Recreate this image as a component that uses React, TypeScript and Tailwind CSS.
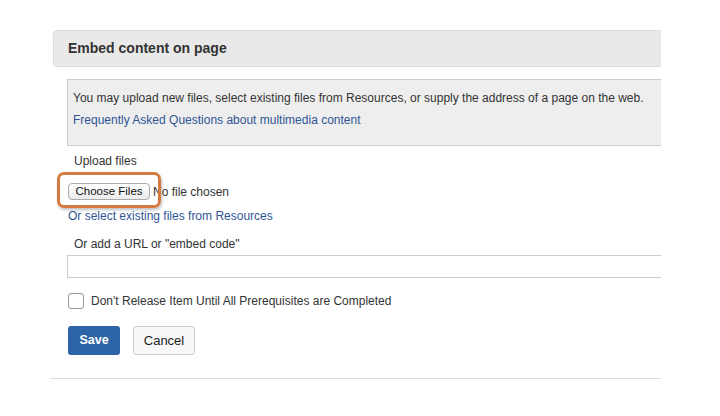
export default function App() {
  return (
    <div className="w-[720px] h-[416px] bg-white text-[12px] text-[#333] font-['Liberation_Sans',Arial,sans-serif] overflow-hidden">
      <div className="ml-[50px] pt-[30px] w-[611px] overflow-hidden">
        {/* Header */}
        <div className="ml-[3px] w-[660px] h-[37px] flex items-center pl-[14px] bg-[#e9e9e9] border border-[#dcdcdc] rounded-[4px]">
          <span className="text-[14px] font-bold text-[#333]">Embed content on page</span>
        </div>

        {/* Info box */}
        <div className="mt-[12px] ml-[17px] w-[660px] h-[67px] bg-[#eeeeee] border border-[#cccccc] pl-[5px] pt-[11px]">
          <p className="leading-[15px]">
            You may upload new files, select existing files from Resources, or supply the address of a page on the web.
          </p>
          <a className="block mt-[7px] leading-[15px] text-[#2f5596]">Frequently Asked Questions about multimedia content</a>
        </div>

        {/* Upload */}
        <div className="mt-[8px] ml-[24px] leading-[15px]">Upload files</div>
        <div className="relative mt-[14px] ml-[18px] flex items-center gap-[3px] h-[17px]">
          <button className="h-[17px] w-[82px] text-[11.5px] leading-none text-[#111] border border-[#aaaaaa] rounded-[4px] bg-gradient-to-b from-white to-[#ececec]">
            Choose Files
          </button>
          <span className="text-[12px]">No file chosen</span>
          <div className="absolute left-[-11px] top-[-11px] w-[104px] h-[36px] border-[3px] border-[#d57a40] rounded-[7px] shadow-[1px_2px_3px_rgba(0,0,0,0.25)]" />
        </div>
        <a className="block mt-[9px] ml-[18px] leading-[15px] text-[#2f5596]">Or select existing files from Resources</a>

        {/* URL */}
        <div className="mt-[13px] ml-[24px] leading-[15px]">Or add a URL or "embed code"</div>
        <div className="mt-[3px] ml-[17px] w-[660px] h-[23px] border border-[#cccccc] bg-white" />

        {/* Checkbox */}
        <div className="mt-[15px] ml-[18px] flex items-center gap-[7px]">
          <div className="w-[16px] h-[16px] border border-[#999] rounded-[3px] bg-white" />
          <span className="leading-[15px]">Don't Release Item Until All Prerequisites are Completed</span>
        </div>

        {/* Buttons */}
        <div className="mt-[17px] ml-[18px] flex gap-[13px]">
          <button className="w-[52px] h-[29px] bg-[#2d64a8] text-white font-bold text-[12.5px] rounded-[3px]">Save</button>
          <button className="w-[62px] h-[29px] bg-[#f8f8f8] border border-[#cccccc] text-[#222] text-[13px] rounded-[3px]">Cancel</button>
        </div>

        <div className="mt-[23px] h-px bg-[#dddddd]" />
      </div>
    </div>
  );
}
